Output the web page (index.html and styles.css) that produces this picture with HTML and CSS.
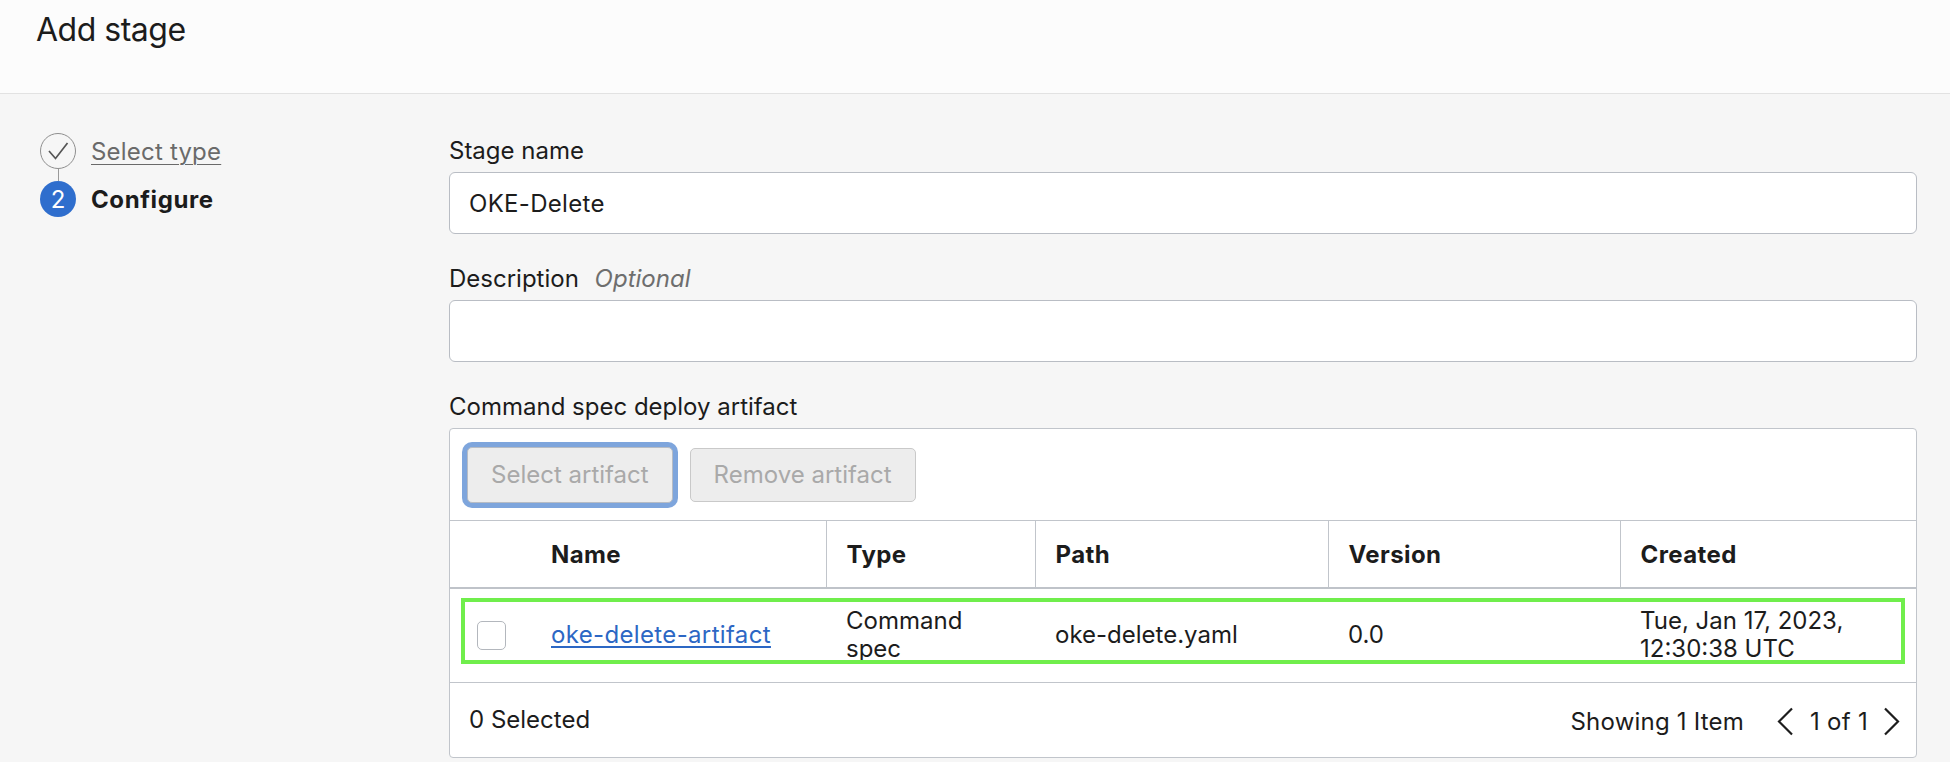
FILE: index.html
```html
<!DOCTYPE html>
<html lang="en">
<head>
<meta charset="utf-8">
<title>Add stage</title>
<link rel="stylesheet" href="styles.css">
</head>
<body>
<header class="page-header">
  <h1 class="page-title">Add stage</h1>
</header>
<div class="page-body">
  <nav class="steps">
    <div class="step">
      <span class="step-icon done">
        <svg width="36" height="36" viewBox="0 0 36 36"><circle cx="18" cy="18" r="17.5" fill="none" stroke="#8e8e8e" stroke-width="1"/><path d="M9 18 L15.5 25.5 L27.5 10" fill="none" stroke="#555555" stroke-width="1.7"/></svg>
      </span>
      <a class="step-link" href="#">Select type</a>
    </div>
    <div class="step-line"></div>
    <div class="step">
      <span class="step-icon current">2</span>
      <span class="step-label">Configure</span>
    </div>
  </nav>
  <main class="form">
    <div class="field">
      <div class="label">Stage name</div>
      <div class="input">OKE-Delete</div>
    </div>
    <div class="field">
      <div class="label">Description <span class="optional">Optional</span></div>
      <div class="input"></div>
    </div>
    <div class="field">
      <div class="label">Command spec deploy artifact</div>
      <div class="panel">
        <div class="toolbar">
          <button class="btn focused">Select artifact</button>
          <button class="btn">Remove artifact</button>
        </div>
        <div class="table-wrap">
          <table class="grid">
            <colgroup>
              <col class="c-check"><col class="c-name"><col class="c-type"><col class="c-path"><col class="c-ver"><col class="c-created">
            </colgroup>
            <thead>
              <tr>
                <th class="th-check"></th>
                <th>Name</th>
                <th>Type</th>
                <th>Path</th>
                <th>Version</th>
                <th>Created</th>
              </tr>
            </thead>
            <tbody>
              <tr>
                <td class="td-check"><span class="checkbox"></span></td>
                <td><a class="link" href="#">oke-delete-artifact</a></td>
                <td>Command spec</td>
                <td>oke-delete.yaml</td>
                <td>0.0</td>
                <td>Tue, Jan 17, 2023, 12:30:38 UTC</td>
              </tr>
            </tbody>
          </table>
          <div class="highlight"></div>
        </div>
        <div class="panel-footer">
          <span>0 Selected</span>
          <div class="pager">
            <span class="showing">Showing 1 Item</span>
            <svg class="chev" width="18" height="29" viewBox="0 0 18 29"><path d="M16 1.5 L3 14.5 L16 27.5" fill="none" stroke="#1d1d1d" stroke-width="2.2"/></svg>
            <span class="pages">1 of 1</span>
            <svg class="chev" width="18" height="29" viewBox="0 0 18 29"><path d="M2 1.5 L15 14.5 L2 27.5" fill="none" stroke="#1d1d1d" stroke-width="2.2"/></svg>
          </div>
        </div>
      </div>
    </div>
  </main>
</div>
</body>
</html>
```
FILE: styles.css
```css
* { box-sizing: border-box; }
html, body { margin: 0; padding: 0; }
body {
  font-family: Inter, "Noto Sans", "Liberation Sans", sans-serif;
  color: #1c1c1c;
  background: #f6f6f6;
  font-size: 24px;
  height: 762px;
  overflow: hidden;
}
.page-header {
  height: 94px;
  background: #fcfcfc;
  border-bottom: 1px solid #e2e2e2;
  padding: 10px 36px 0;
}
.page-title {
  margin: 0;
  font-size: 32px;
  font-weight: 400;
  line-height: 40px;
  letter-spacing: -0.5px;
}
.page-body {
  display: flex;
  padding: 39px 33px 0 40px;
}
.steps {
  width: 409px;
  flex: none;
}
.step {
  display: flex;
  align-items: center;
  gap: 15px;
  height: 36px;
}
.step-icon {
  width: 36px;
  height: 36px;
  flex: none;
  display: flex;
  align-items: center;
  justify-content: center;
}
.step-icon svg { display: block; }
.step-icon.current {
  border-radius: 50%;
  background: #2f6ecd;
  color: #fff;
  font-size: 24px;
}
.step-link {
  color: #6a6a6a;
  text-decoration: underline;
  text-decoration-thickness: 1px;
  text-underline-offset: 4px;
  letter-spacing: 0.2px;
}
.step-label {
  font-weight: 700;
  letter-spacing: 0.6px;
}
.step-line {
  width: 1px;
  height: 12px;
  background: #9a9a9a;
  margin-left: 17.5px;
}
.form {
  flex: 1;
  padding-top: 3px;
  display: flex;
  flex-direction: column;
  gap: 30px;
}
.label {
  line-height: 30px;
  margin-bottom: 6px;
}
.optional {
  color: #6e6e6e;
  font-style: italic;
  margin-left: 9px;
}
.input {
  height: 62px;
  background: #fff;
  border: 1px solid #b9bdc4;
  border-radius: 6px;
  padding: 0 19px;
  display: flex;
  align-items: center;
  letter-spacing: 0.3px;
}
.panel {
  background: #fff;
  border: 1px solid #c1c5cb;
  border-radius: 4px;
}
.toolbar {
  display: flex;
  gap: 17px;
  align-items: center;
  height: 92px;
  padding: 0 17px;
  border-bottom: 1px solid #c1c5cb;
}
.btn {
  font: inherit;
  font-size: 24px;
  height: 54px;
  padding: 0 23px;
  background: #ededed;
  color: #a9a9a9;
  border: 1px solid #c9c9c9;
  border-radius: 5px;
}
.btn.focused {
  height: 56px;
  border-color: #b7bcc4;
  box-shadow: 0 0 0 5px #7ea5dc;
}
.table-wrap { position: relative; }
.grid {
  width: 100%;
  border-collapse: collapse;
  table-layout: fixed;
}
.c-check { width: 81px; }
.c-name { width: 295px; }
.c-type { width: 209px; }
.c-path { width: 293px; }
.c-ver { width: 292px; }
.grid th {
  text-align: left;
  font-weight: 700;
  letter-spacing: 0.4px;
  height: 67px;
  padding: 0 20px;
  border-left: 1px solid #c1c5cb;
  border-bottom: 2px solid #bfc3c9;
}
.grid th.th-check,
.grid th.th-check + th { border-left: none; }
.grid td {
  height: 94px;
  padding: 0 20px;
  line-height: 28px;
  border-bottom: 1px solid #c1c5cb;
}
.grid td.td-check { padding: 0 0 0 27px; }
.checkbox {
  display: block;
  width: 29px;
  height: 29px;
  border: 1px solid #b3b7bd;
  border-radius: 5px;
  background: #fff;
}
.link {
  color: #2c67c4;
  text-decoration: underline;
  text-decoration-thickness: 1.5px;
  text-underline-offset: 3px;
  letter-spacing: 0.35px;
}
.highlight {
  position: absolute;
  left: 11px;
  top: 77px;
  width: 1444px;
  height: 66px;
  border: 4px solid #70ee4c;
  pointer-events: none;
}
.panel-footer {
  height: 74px;
  display: flex;
  align-items: center;
  justify-content: space-between;
  padding: 0 15px 0 19px;
}
.pager {
  display: flex;
  align-items: center;
  padding-top: 3px;
}
.showing { margin-right: 32px; letter-spacing: 0.2px; }
.pages { margin: 0 15px 0 16px; letter-spacing: 0.3px; }
.chev { display: block; }
```
